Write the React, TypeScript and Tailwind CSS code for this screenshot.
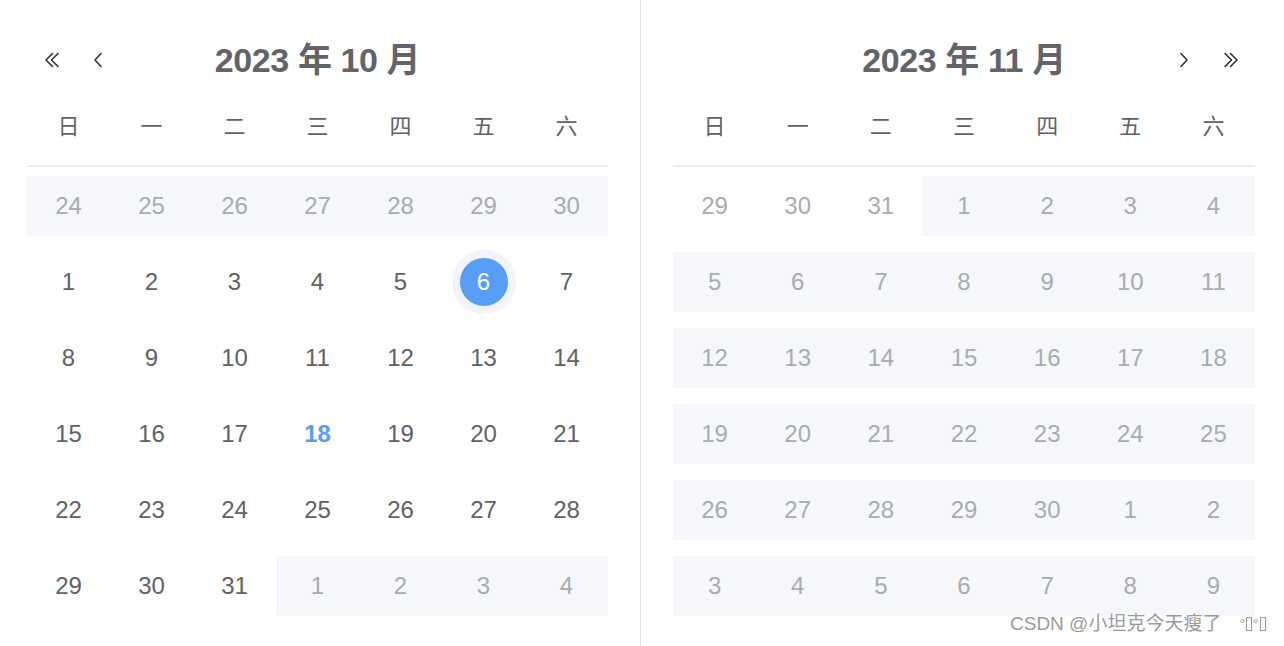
import React from "react";

type Cell = { d: number; grey?: boolean; bg?: boolean; sel?: boolean; today?: boolean };

const FONT = { fontFamily: '"Liberation Sans", "Noto Sans CJK SC", sans-serif' };

const weekdays = ["日", "一", "二", "三", "四", "五", "六"];

function range(a: number, b: number, opts: Partial<Cell> = {}): Cell[] {
  const out: Cell[] = [];
  for (let i = a; i <= b; i++) out.push({ d: i, ...opts });
  return out;
}

const leftCells: Cell[] = [
  ...range(24, 30, { grey: true, bg: true }),
  ...range(1, 31).map((c) => ({ ...c, sel: c.d === 6, today: c.d === 18 })),
  ...range(1, 4, { grey: true, bg: true }),
];

const rightCells: Cell[] = [
  ...range(29, 31, { grey: true }),
  ...range(1, 30, { grey: true, bg: true }),
  ...range(1, 9, { grey: true, bg: true }),
];

function chunk(cells: Cell[]): Cell[][] {
  const rows: Cell[][] = [];
  for (let i = 0; i < cells.length; i += 7) rows.push(cells.slice(i, i + 7));
  return rows;
}

function DoubleLeft() {
  return (
    <svg width="16" height="16" viewBox="0 0 16 16" fill="none" stroke="#303133" strokeWidth="1.6" strokeLinecap="round" strokeLinejoin="round">
      <path d="M8.5 1.5 L2 8 L8.5 14.5" />
      <path d="M14 1.5 L7.5 8 L14 14.5" />
    </svg>
  );
}
function SingleLeft() {
  return (
    <svg width="10" height="16" viewBox="0 0 10 16" fill="none" stroke="#303133" strokeWidth="1.6" strokeLinecap="round" strokeLinejoin="round">
      <path d="M8 1.5 L2 8 L8 14.5" />
    </svg>
  );
}
function DoubleRight() {
  return (
    <svg width="16" height="16" viewBox="0 0 16 16" fill="none" stroke="#303133" strokeWidth="1.6" strokeLinecap="round" strokeLinejoin="round">
      <path d="M2 1.5 L8.5 8 L2 14.5" />
      <path d="M7.5 1.5 L14 8 L7.5 14.5" />
    </svg>
  );
}
function SingleRight() {
  return (
    <svg width="10" height="16" viewBox="0 0 10 16" fill="none" stroke="#303133" strokeWidth="1.6" strokeLinecap="round" strokeLinejoin="round">
      <path d="M2 1.5 L8 8 L2 14.5" />
    </svg>
  );
}

function Panel({ title, cells, side }: { title: string; cells: Cell[]; side: "left" | "right" }) {
  const rows = chunk(cells);
  return (
    <div className="flex flex-col">
      <div className="grid grid-cols-[1fr_auto_1fr] items-center h-[64px] mt-[28px]">
        <div className="flex items-center pl-[17px] gap-[33px]">
          {side === "left" && (
            <>
              <DoubleLeft />
              <SingleLeft />
            </>
          )}
        </div>
        <div className="text-[34px] font-semibold text-[#626469] tracking-[-0.4px] leading-none" style={FONT}>
          {title}
        </div>
        <div className="flex items-center justify-end pr-[16px] gap-[34px]">
          {side === "right" && (
            <>
              <SingleRight />
              <DoubleRight />
            </>
          )}
        </div>
      </div>
      <div className="grid grid-cols-7 h-[52px] mt-[8px] items-center">
        {weekdays.map((w) => (
          <div key={w} className="text-center text-[22px] text-[#606266]" style={FONT}>
            {w}
          </div>
        ))}
      </div>
      <div className="h-[2px] bg-[#ebedf0] mt-[13px]" />
      <div className="flex flex-col gap-4 mt-[9px]">
        {rows.map((row, ri) => (
          <div key={ri} className="grid grid-cols-7 h-[60px]">
            {row.map((c, ci) => (
              <div
                key={ci}
                className={`flex items-center justify-center ${c.bg ? "bg-[#f5f7fa]" : ""}`}
              >
                {c.sel ? (
                  <div className="w-12 h-12 rounded-full bg-[#589df7] ring-8 ring-[#f1f5fb] flex items-center justify-center text-white text-[24px]" style={FONT}>
                    {c.d}
                  </div>
                ) : (
                  <span
                    className={`text-[24px] ${
                      c.today ? "text-[#589df7] font-semibold" : c.grey ? "text-[#a8abb2]" : "text-[#606266]"
                    }`}
                    style={FONT}
                  >
                    {c.d}
                  </span>
                )}
              </div>
            ))}
          </div>
        ))}
      </div>
    </div>
  );
}

function Tofu() {
  return <span className="inline-block w-[6px] h-[14px] border border-[#9a9a9a] align-[-1px]" />;
}

export default function App() {
  return (
    <div className="relative flex w-[1284px] h-[646px] bg-white overflow-hidden">
      <div className="w-[641px] h-full pl-[27px] pr-[32px] border-r border-[#e4e4e7]">
        <Panel title="2023 年 10 月" cells={leftCells} side="left" />
      </div>
      <div className="w-[643px] h-full pl-[32px] pr-[29px]">
        <Panel title="2023 年 11 月" cells={rightCells} side="right" />
      </div>
      <div
        className="absolute left-[1010px] top-[614px] flex items-center text-[19px] text-[#9a9a9a] whitespace-nowrap leading-none"
        style={{ ...FONT, textShadow: "0 0 2px #fff, 0 0 1px #fff" }}
      >
        <span>CSDN @小坦克今天瘦了</span>
        <span className="ml-[18px] flex items-start gap-[1px]">
          <span className="text-[14px]">°</span>
          <Tofu />
          <span className="text-[14px]">°</span>
          <Tofu />
        </span>
      </div>
    </div>
  );
}
